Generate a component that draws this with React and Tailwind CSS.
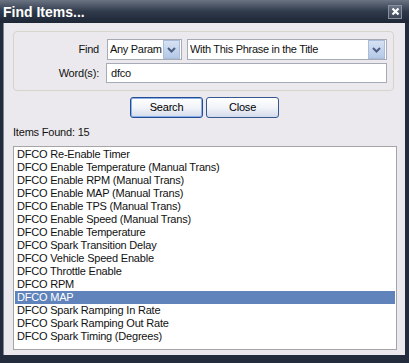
const ITEMS = [
  "DFCO Re-Enable Timer",
  "DFCO Enable Temperature (Manual Trans)",
  "DFCO Enable RPM (Manual Trans)",
  "DFCO Enable MAP (Manual Trans)",
  "DFCO Enable TPS (Manual Trans)",
  "DFCO Enable Speed (Manual Trans)",
  "DFCO Enable Temperature",
  "DFCO Spark Transition Delay",
  "DFCO Vehicle Speed Enable",
  "DFCO Throttle Enable",
  "DFCO RPM",
  "DFCO MAP",
  "DFCO Spark Ramping In Rate",
  "DFCO Spark Ramping Out Rate",
  "DFCO Spark Timing (Degrees)"
];

const SELECTED = 11;

function DropButton() {
  return (
    <div className="w-[17px] h-[19px] shrink-0 border border-[#a9bcd9] bg-gradient-to-b from-[#d6e2f3] to-[#b4c8e6] flex items-center justify-center">
      <svg width="9" height="6" viewBox="0 0 9 6">
        <polyline points="1,1 4.5,4.5 8,1" fill="none" stroke="#4b5e82" strokeWidth="2" />
      </svg>
    </div>
  );
}

function Select({ value, className }) {
  return (
    <div className={`h-[21px] border border-[#a5acb5] bg-white flex items-center pl-[2px] pr-px ${className}`}>
      <span className="flex-1 whitespace-nowrap overflow-hidden tracking-[-0.3px]">{value}</span>
      <DropButton />
    </div>
  );
}

function Button({ label, primary }) {
  return (
    <button
      className={`w-[73px] h-[21px] rounded-[3px] bg-gradient-to-b from-white via-[#f2f4f9] to-[#d3dbeb] text-[11px] text-black ${
        primary ? "border border-[#1f4d96] shadow-[inset_0_0_0_1px_#8fb0e6]" : "border border-[#34588f]"
      }`}
    >
      {label}
    </button>
  );
}

export default function App() {
  return (
    <div
      className="w-[409px] h-[363px] bg-[#222c3c] flex flex-col text-[11px] tracking-[-0.2px] text-[#111]"
      style={{ fontFamily: '"Liberation Sans", Arial, sans-serif' }}
    >
      <div className="h-[23px] shrink-0 bg-gradient-to-b from-[#6b7483] via-[#2f3a4b] to-[#1d2635] flex items-center justify-between pl-[3px] pr-[7px]">
        <span className="text-white font-bold text-[14px] tracking-normal leading-none">Find Items...</span>
        <div className="w-[14px] h-[14px] border border-[#8891a0] bg-gradient-to-b from-[#6a7383] to-[#3b4556] flex items-center justify-center">
          <svg width="9" height="9" viewBox="0 0 9 9">
            <path d="M1.5 1.5 L7.5 7.5 M7.5 1.5 L1.5 7.5" stroke="white" strokeWidth="2.2" />
          </svg>
        </div>
      </div>

      <div className="flex-1 ml-[3px] mr-[4px] mb-[8px] border-l border-[#7c8594] bg-[#ebe9ed] flex flex-col pl-[9px] pt-[8px]">
        <div className="w-[381px] h-[60px] border border-[#d6d4cb] rounded-[4px] pt-[7px] pl-[1px]">
          <div className="flex items-center">
            <span className="w-[92px] text-right pr-[8px]">Find</span>
            <Select value="Any Param" className="w-[75px]" />
            <Select value="With This Phrase in the Title" className="w-[200px] ml-[5px]" />
          </div>
          <div className="flex items-center mt-[3px]">
            <span className="w-[91px] text-right pr-[7px]">Word(s):</span>
            <div className="w-[281px] h-[20px] border border-[#a5acb5] bg-white flex items-center pl-[4px]">dfco</div>
          </div>
        </div>

        <div className="flex gap-[3px] mt-[6px] ml-[117px]">
          <Button label="Search" primary />
          <Button label="Close" />
        </div>

        <div className="mt-[7px] h-[14px] leading-[14px]">Items Found: 15</div>

        <div className="mt-[7px] w-[384px] h-[204px] border border-[#a5a5a5] bg-white p-px overflow-hidden">
          {ITEMS.map((item, i) => (
            <div
              key={item}
              className={`h-[13px] leading-[13px] pl-[2px] whitespace-nowrap ${
                i === SELECTED ? "bg-[#6183bb] text-white" : "text-[#111]"
              }`}
            >
              {item}
            </div>
          ))}
        </div>
      </div>
    </div>
  );
}
